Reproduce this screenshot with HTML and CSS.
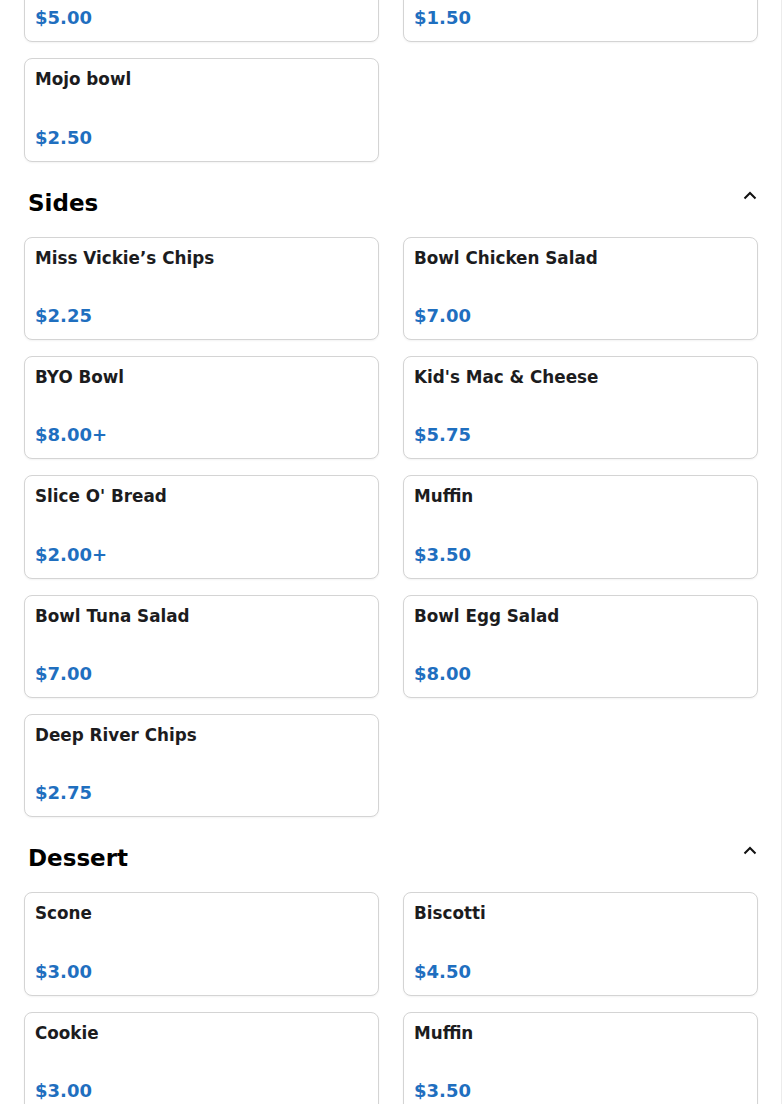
FILE: index.html
```html
<!DOCTYPE html>
<html lang="en">
<head>
<meta charset="utf-8">
<title>Menu</title>
<link rel="stylesheet" href="styles.css">
</head>
<body>
<main class="page">
  <section class="section">
    <div class="grid">
      <div class="card"><div class="name">Burrito Bowl</div><div class="price">$5.00</div></div>
      <div class="card"><div class="name">Extra Rice</div><div class="price">$1.50</div></div>
      <div class="card"><div class="name">Mojo bowl</div><div class="price">$2.50</div></div>
    </div>
  </section>

  <section class="section">
    <div class="section-head">
      <h2 class="section-title">Sides</h2>
      <svg class="chev" width="16" height="16" viewBox="0 0 16 16" aria-hidden="true"><path d="M2.5 10.5 L8 5 L13.5 10.5" fill="none" stroke="#111" stroke-width="2"/></svg>
    </div>
    <div class="grid">
      <div class="card"><div class="name">Miss Vickie’s Chips</div><div class="price">$2.25</div></div>
      <div class="card"><div class="name">Bowl Chicken Salad</div><div class="price">$7.00</div></div>
      <div class="card"><div class="name">BYO Bowl</div><div class="price">$8.00+</div></div>
      <div class="card"><div class="name">Kid's Mac &amp; Cheese</div><div class="price">$5.75</div></div>
      <div class="card"><div class="name">Slice O' Bread</div><div class="price">$2.00+</div></div>
      <div class="card"><div class="name">Muffin</div><div class="price">$3.50</div></div>
      <div class="card"><div class="name">Bowl Tuna Salad</div><div class="price">$7.00</div></div>
      <div class="card"><div class="name">Bowl Egg Salad</div><div class="price">$8.00</div></div>
      <div class="card"><div class="name">Deep River Chips</div><div class="price">$2.75</div></div>
    </div>
  </section>

  <section class="section">
    <div class="section-head">
      <h2 class="section-title">Dessert</h2>
      <svg class="chev" width="16" height="16" viewBox="0 0 16 16" aria-hidden="true"><path d="M2.5 10.5 L8 5 L13.5 10.5" fill="none" stroke="#111" stroke-width="2"/></svg>
    </div>
    <div class="grid">
      <div class="card"><div class="name">Scone</div><div class="price">$3.00</div></div>
      <div class="card"><div class="name">Biscotti</div><div class="price">$4.50</div></div>
      <div class="card"><div class="name">Cookie</div><div class="price">$3.00</div></div>
      <div class="card"><div class="name">Muffin</div><div class="price">$3.50</div></div>
    </div>
  </section>
</main>
</body>
</html>
```

FILE: styles.css
```css
html, body {
  margin: 0;
  padding: 0;
  background: #fff;
}

body {
  font-family: "DejaVu Sans", "Liberation Sans", sans-serif;
  color: #1a1a1a;
  overflow: hidden;
}

.page {
  width: 782px;
  box-sizing: border-box;
  border-right: 1px solid #ececec;
  padding: 0 23px 40px 24px;
  margin-top: -61px;
}

.grid {
  display: grid;
  grid-template-columns: 1fr 1fr;
  column-gap: 24px;
  row-gap: 16px;
}

.card {
  box-sizing: border-box;
  height: 103.25px;
  border: 1px solid #d4d4d4;
  border-radius: 8px;
  padding: 10px;
  display: flex;
  flex-direction: column;
  justify-content: space-between;
  box-shadow: 0 1px 2px rgba(0, 0, 0, 0.05);
  background: #fff;
}

.name {
  font-size: 16.8px;
  font-weight: 700;
  line-height: 20px;
  color: #1c1c1e;
}

.price {
  font-size: 18px;
  font-weight: 700;
  line-height: 26px;
  color: #1f6fbf;
}

.section-head {
  display: flex;
  justify-content: space-between;
  align-items: flex-start;
  height: 28px;
  margin: 27.25px 0 20px;
  padding: 0 0 0 4px;
}

.section-title {
  margin: 0;
  font-size: 23px;
  line-height: 28px;
  font-weight: 700;
  color: #000;
}

.chev {
  display: block;
  margin-top: -1px;
}
```
